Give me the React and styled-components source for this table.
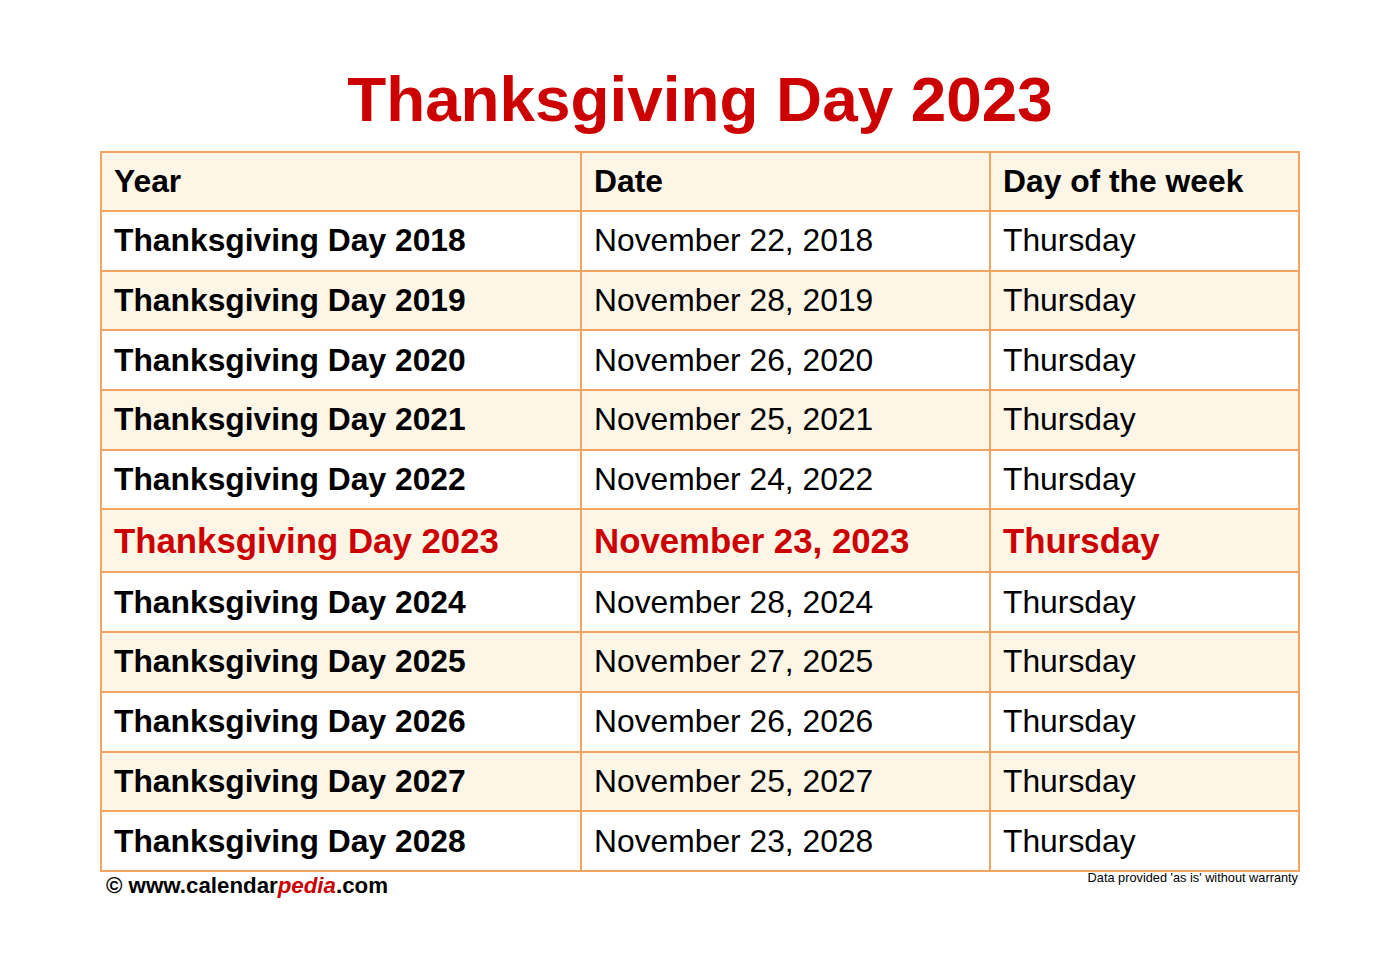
import React from 'react';
import styled, { createGlobalStyle } from 'styled-components';

const GlobalStyle = createGlobalStyle`
  body {
    margin: 0;
    background: #fff;
    font-family: 'Liberation Sans', Arial, sans-serif;
    color: #000;
  }
`;

const Page = styled.div`
  width: 1400px;
  height: 973px;
`;

const Title = styled.h1`
  margin: 0;
  padding: 67px 0 20px;
  font-size: 63.8px;
  line-height: 64px;
  font-weight: 700;
  color: #cc0000;
  text-align: center;
`;

const Sheet = styled.div`
  width: 1198px;
  margin-left: 100px;
  display: flex;
  flex-direction: column;
`;

const Table = styled.table`
  width: 100%;
  border-collapse: collapse;
  table-layout: fixed;
`;

const Row = styled.tr`
  height: ${({ $height }) => $height}px;
  background: ${({ $tinted }) => ($tinted ? '#fdf5e6' : '#fff')};
`;

const Cell = styled.td`
  border: 2px solid #f4a460;
  padding: 0 12px;
  vertical-align: middle;
  white-space: nowrap;
  font-size: ${({ $hot }) => ($hot ? 34.8 : 31.8)}px;
  font-weight: ${({ $bold, $hot }) => ($bold || $hot ? 700 : 400)};
  color: ${({ $hot }) => ($hot ? '#cc0000' : '#000')};
`;

const HeadCell = styled.th`
  border: 2px solid #f4a460;
  padding: 0 12px;
  text-align: left;
  vertical-align: middle;
  font-size: 31.8px;
  font-weight: 700;
`;

const Footer = styled.div`
  display: flex;
  justify-content: space-between;
  align-items: flex-start;
`;

const Brand = styled.div`
  padding: 3px 0 0 6px;
  font-size: 22.3px;
  line-height: 22px;
  font-weight: 700;

  em {
    color: #cc0000;
    font-style: italic;
  }
`;

const Disclaimer = styled.div`
  margin-top: -1px;
  font-size: 12.75px;
  line-height: 13px;
  color: #000;
`;

const dates = [
  [2018, 'November 22, 2018'],
  [2019, 'November 28, 2019'],
  [2020, 'November 26, 2020'],
  [2021, 'November 25, 2021'],
  [2022, 'November 24, 2022'],
  [2023, 'November 23, 2023'],
  [2024, 'November 28, 2024'],
  [2025, 'November 27, 2025'],
  [2026, 'November 26, 2026'],
  [2027, 'November 25, 2027'],
  [2028, 'November 23, 2028'],
];

const App = () => (
  <Page>
    <GlobalStyle />
    <Title>Thanksgiving Day 2023</Title>
    <Sheet>
      <Table>
        <colgroup>
          <col style={{ width: 480 }} />
          <col style={{ width: 409 }} />
          <col style={{ width: 309 }} />
        </colgroup>
        <thead>
          <Row $tinted $height={59}>
            <HeadCell>Year</HeadCell>
            <HeadCell>Date</HeadCell>
            <HeadCell>Day of the week</HeadCell>
          </Row>
        </thead>
        <tbody>
          {dates.map(([year, date], i) => {
            const hot = year === 2023;
            return (
              <Row key={year} $tinted={i % 2 === 1} $height={hot ? 63 : 59.7}>
                <Cell $bold $hot={hot}>Thanksgiving Day {year}</Cell>
                <Cell $hot={hot}>{date}</Cell>
                <Cell $hot={hot}>Thursday</Cell>
              </Row>
            );
          })}
        </tbody>
      </Table>
      <Footer>
        <Brand>
          © www.calendar<em>pedia</em>.com
        </Brand>
        <Disclaimer>Data provided 'as is' without warranty</Disclaimer>
      </Footer>
    </Sheet>
  </Page>
);

export default App;
